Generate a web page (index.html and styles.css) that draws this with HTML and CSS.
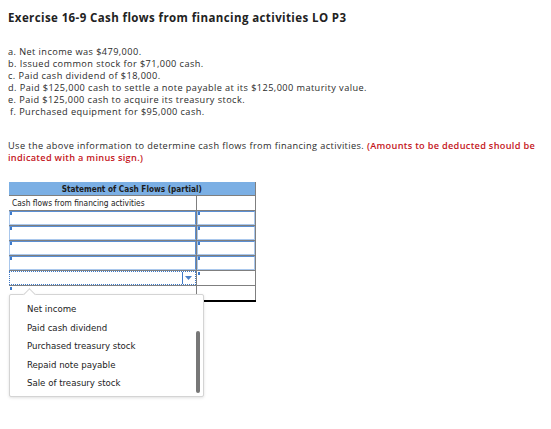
FILE: index.html
```html
<!DOCTYPE html>
<html>
<head>
<meta charset="utf-8">
<link rel="stylesheet" href="styles.css">
</head>
<body>
<h1 class="title">Exercise 16-9 Cash flows from financing activities LO P3</h1>
<ul class="facts">
  <li>a. Net income was $479,000.</li>
  <li>b. Issued common stock for $71,000 cash.</li>
  <li>c. Paid cash dividend of $18,000.</li>
  <li>d. Paid $125,000 cash to settle a note payable at its $125,000 maturity value.</li>
  <li>e. Paid $125,000 cash to acquire its treasury stock.</li>
  <li class="indent">f. Purchased equipment for $95,000 cash.</li>
</ul>
<p class="instr">Use the above information to determine cash flows from financing activities. <span class="warn">(Amounts to be deducted should be<br>indicated with a minus sign.)</span></p>

<div class="sheet">
  <table class="grid">
    <colgroup><col class="c1"><col class="c2"></colgroup>
    <tr><th colspan="2" class="head">Statement of Cash Flows (partial)</th></tr>
    <tr><td class="lbl first">Cash flows from financing activities</td><td class="amt"></td></tr>
    <tr><td class="lbl"><div class="inp"><span class="mark"></span></div></td><td class="amt"><div class="inp"><span class="mark"></span></div></td></tr>
    <tr><td class="lbl"><div class="inp"><span class="mark"></span></div></td><td class="amt"><div class="inp"><span class="mark"></span></div></td></tr>
    <tr><td class="lbl"><div class="inp"><span class="mark"></span></div></td><td class="amt"><div class="inp"><span class="mark"></span></div></td></tr>
    <tr><td class="lbl"><div class="inp"><span class="mark"></span></div></td><td class="amt"><div class="inp"><span class="mark"></span></div></td></tr>
    <tr><td class="lbl"><div class="sel"><span class="btn"><svg width="7" height="4" viewBox="0 0 7 4"><path d="M0 0h7L3.5 4z" fill="#4a7fc8"/></svg></span></div></td><td class="amt"><div class="inp bare"><span class="mark"></span></div></td></tr>
    <tr class="total"><td class="lbl"><div class="inp bare"><span class="mark"></span></div></td><td class="amt sum"></td></tr>
  </table>

  <div class="popup">
    <span class="caret"></span>
    <ul class="opts">
      <li>Net income</li>
      <li>Paid cash dividend</li>
      <li>Purchased treasury stock</li>
      <li>Repaid note payable</li>
      <li>Sale of treasury stock</li>
    </ul>
    <span class="scroll"></span>
  </div>
</div>
</body>
</html>
```
FILE: styles.css
```css
html, body { margin: 0; padding: 0; background: #fff; }
html { min-height: 100%; }
body {
  min-height: 429px;
  padding: 0 8px;
  font-family: "Open Sans", "Liberation Sans", sans-serif;
  color: #2b2b2b;
}
.title {
  margin: 11px 0 0 0;
  font-size: 11.5px;
  letter-spacing: 0.4px;
  line-height: 14px;
  font-weight: 700;
  color: #222;
}
.facts {
  list-style: none;
  margin: 21px 0 0 0;
  padding: 0;
  font-size: 9.2px;
  letter-spacing: 0.42px;
  line-height: 12px;
}
.facts .indent { padding-left: 2px; }
.instr {
  margin: 22px 0 0 0;
  font-size: 9.2px;
  letter-spacing: 0.4px;
  line-height: 12px;
  white-space: nowrap;
}
.warn { color: #c4161c; font-weight: 600; letter-spacing: 0.3px; }

.sheet {
  position: relative;
  margin-top: 18px;
  width: 247px;
  padding-left: 1px;
  padding-bottom: 110px;
}
.grid {
  border-collapse: collapse;
  width: 246px;
  table-layout: fixed;
  font-family: "DejaVu Sans Condensed", "DejaVu Sans", Tahoma, sans-serif;
  font-stretch: condensed;
  font-size: 8.3px;
  color: #222;
}
.c1 { width: 187px; }
.c2 { width: 59px; }
.grid th, .grid td {
  padding: 0;
  height: 14px;
  border-bottom: 1px solid #7f7f7f;
  white-space: nowrap;
}
.head {
  background: #7bafe4;
  font-weight: 700;
  font-size: 8.2px;
  text-align: center;
  height: 13px !important;
  border-right: 1px solid #7f7f7f;
  color: #1c1c1c;
}
.amt { border-left: 1px solid #7f7f7f; border-right: 1px solid #7f7f7f; }
.first { padding-left: 3px !important; }
.inp {
  position: relative;
  height: 12px;
  border: 1px solid #a9c7ec;
  border-top-color: #5b8fd3;
}
.lbl .inp { border-right-color: #5b8fd3; }
.inp.bare { border-color: transparent; }
.mark {
  position: absolute;
  left: 0;
  top: 0;
  width: 2px;
  height: 3px;
  background: #3d7acb;
}
.sel {
  height: 12px;
  border: 1px dotted #3c78c8;
  display: flex;
  justify-content: flex-end;
}
.btn {
  width: 12px;
  border-left: 1px solid #3c78c8;
  display: flex;
  align-items: center;
  justify-content: center;
}
.total .sum {
  border-top: 1px solid #000;
  border-bottom: 2px solid #000;
}
.total .lbl { border-bottom: 1px solid #7f7f7f; }

.popup {
  position: absolute;
  left: 1px;
  top: 112px;
  width: 195px;
  height: 103px;
  box-sizing: border-box;
  background: #fff;
  border: 1px solid #d4d4d4;
  border-radius: 2px;
  box-shadow: 0 1px 3px rgba(0,0,0,0.12);
}
.caret {
  position: absolute;
  left: 15px;
  top: -5px;
  width: 8px;
  height: 8px;
  background: #fff;
  border-left: 1px solid #d4d4d4;
  border-top: 1px solid #d4d4d4;
  transform: rotate(45deg);
}
.opts {
  position: relative;
  list-style: none;
  margin: 0;
  padding: 5px 0 0 17px;
  font-family: "DejaVu Sans", Tahoma, sans-serif;
  font-size: 8.6px;
  color: #222;
}
.opts li { height: 18.6px; line-height: 18.6px; }
.scroll {
  position: absolute;
  right: 3px;
  top: 36px;
  width: 4px;
  height: 62px;
  border-radius: 2px;
  background: #777;
}
```
